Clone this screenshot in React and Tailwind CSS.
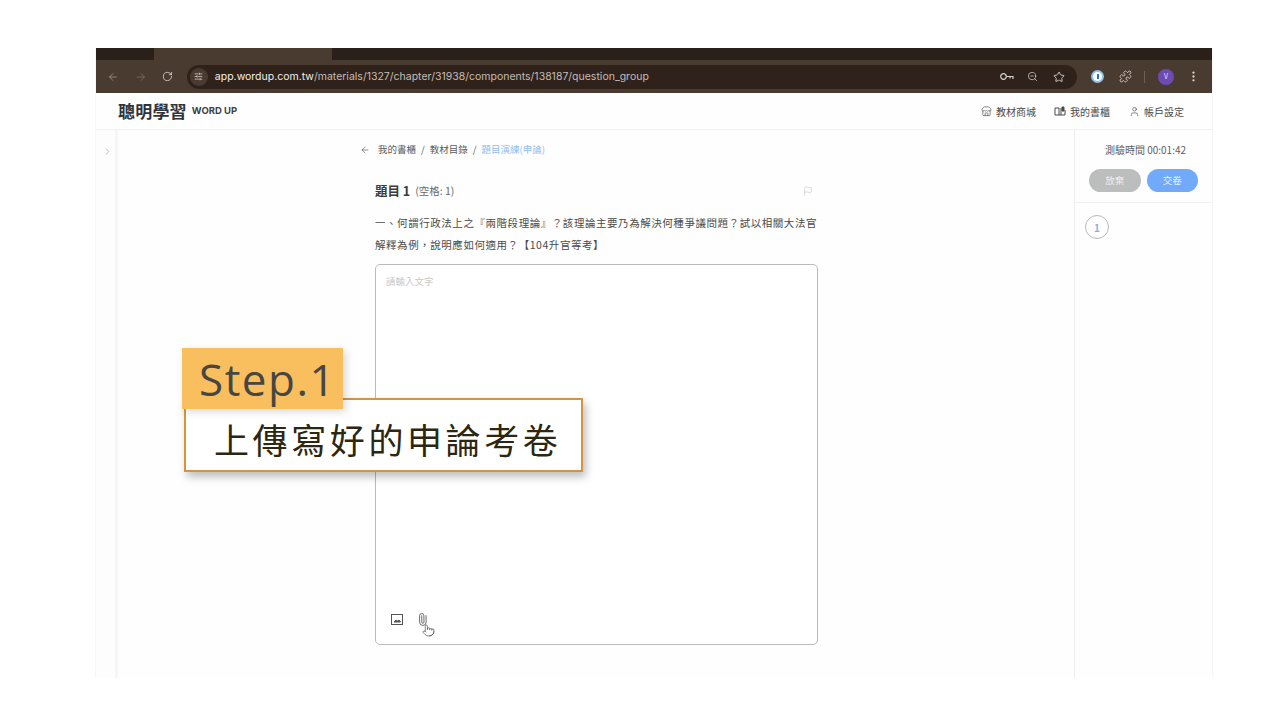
import { ArrowLeft, ArrowRight, RotateCw, SlidersHorizontal, ZoomOut, Star, Puzzle, EllipsisVertical, Store, User, Flag, ChevronRight, Paperclip, Pointer } from 'lucide-react';

const FONT = 'font-["Noto_Sans_CJK_TC","Noto_Sans",sans-serif]';

function BrowserBar() {
  return (
    <div>
      <div className="flex h-[12px] bg-[#2b2019]">
        <div className="ml-[58px] h-full w-[178px] bg-[#4a3b30]" />
      </div>
      <div className="flex h-[33px] items-center bg-[#4a3b30] pl-[11px] pr-[12px] text-[#d9d4d0]">
        <ArrowLeft size={12} strokeWidth={1.5} className="text-[#a79d95]" />
        <ArrowRight size={12} strokeWidth={1.5} className="ml-[16px] text-[#7f736a]" />
        <RotateCw size={11} strokeWidth={1.8} className="ml-[15px]" />
        <div className="ml-[14px] flex h-[24px] w-[894px] items-center rounded-full bg-[#2e221b] pl-[3px] pr-[12px]">
          <div className="flex h-[18px] w-[18px] items-center justify-center rounded-full bg-[#4a3b30]">
            <SlidersHorizontal size={9} strokeWidth={2} />
          </div>
          <span className="ml-[7px] font-['Inter',sans-serif] text-[10.5px] text-[#e3dfdc]">
            <span className="text-[#f2efed]">app.wordup.com.tw</span>
            <span className="text-[#c4bcb6]">/materials/1327/chapter/31938/components/138187/question_group</span>
          </span>
          <div className="ml-auto flex items-center gap-[13px]">
            <svg width="14" height="9" viewBox="0 0 14 9" fill="none" stroke="currentColor" strokeWidth="1.2">
              <circle cx="3.5" cy="4.5" r="2.8" />
              <path d="M6.3 4.5H13V7M10 4.5V6.5" />
            </svg>
            <ZoomOut size={11} strokeWidth={1.6} />
            <Star size={12} strokeWidth={1.8} className="ml-[2px]" />
          </div>
        </div>
        <div className="ml-[14px] flex h-[13px] w-[13px] items-center justify-center rounded-full border-[2px] border-[#8ec1f0] bg-white">
          <span className="h-[5px] w-[2px] bg-[#2e6fb5]" />
        </div>
        <Puzzle size={13} strokeWidth={1.6} className="ml-[15px]" />
        <div className="ml-[12px] h-[12px] w-px bg-[#6d5f55]" />
        <div className="ml-[13px] flex h-[16px] w-[16px] items-center justify-center rounded-full bg-[#6d4bb3] text-[7px] text-[#e8def8]">V</div>
        <EllipsisVertical size={13} strokeWidth={2.2} className="ml-[13px]" />
      </div>
    </div>
  );
}

function TopNav() {
  return (
    <div className="flex h-[37px] items-center border-b border-[#f0f1f1] pl-[22px] pr-[28px]">
      <span className="text-[17px] font-bold tracking-[0.2px] text-[#30343a]">聰明學習</span>
      <span className="ml-[5px] font-['Inter',sans-serif] text-[9.5px] font-bold text-[#3c3f44]">WORD UP</span>
      <div className="ml-auto flex items-center text-[10px] text-[#4a4a4a]">
        <Store size={11} strokeWidth={1.4} />
        <span className="ml-[4px]">教材商城</span>
        <svg className="ml-[18px]" width="12" height="11" viewBox="0 0 12 11" fill="none" stroke="currentColor" strokeWidth="1">
          <path d="M1 2h4v7H1zM5 9h2M7 2v7h4V4" />
          <path d="M8 1h2v4H8z" fill="currentColor" />
        </svg>
        <span className="ml-[4px]">我的書櫃</span>
        <User size={11} strokeWidth={1.4} className="ml-[19px]" />
        <span className="ml-[4px]">帳戶設定</span>
      </div>
    </div>
  );
}

function QuestionPanel() {
  return (
    <div className="flex-1 pl-[242px]">
      <div className="flex h-[39px] items-center text-[9.5px] text-[#5c5c5c]">
        <ArrowLeft size={10} strokeWidth={1.4} className="text-[#444]" />
        <span className="ml-[8px]">我的書櫃</span>
        <span className="mx-[5px]">/</span>
        <span>教材目錄</span>
        <span className="mx-[5px]">/</span>
        <span className="text-[#8fbdf0]">題目演練(申論)</span>
      </div>
      <div className="ml-[15px] w-[443px]">
        <div className="mt-[12px] flex h-[20px] items-center">
          <span className="text-[12.5px] font-bold text-[#3a3a3a]">題目 1</span>
          <span className="ml-[5px] text-[10.5px] text-[#6a6a6a]">(空格: 1)</span>
          <Flag size={10} strokeWidth={1} className="ml-auto mr-[5px] text-[#a9a9a9]" />
        </div>
        <p className="mt-[11px] w-[443px] text-[10.5px] leading-[22px] tracking-[0.55px] text-[#4a4a4a]">
          一、何謂行政法上之『兩階段理論』？該理論主要乃為解決何種爭議問題？試以相關大法官解釋為例，說明應如何適用？【104升官等考】
        </p>
        <div className="mt-[8px] flex h-[381px] flex-col rounded-[5px] border border-[#b9bcbc] bg-white px-[10px] pb-[18px] pt-[9px]">
          <span className="text-[9.5px] text-[#c8c8c8]">請輸入文字</span>
          <div className="mt-auto flex items-center pl-[5px] text-[#555]">
            <svg width="12" height="11" viewBox="0 0 12 11" fill="none" stroke="currentColor" strokeWidth="1">
              <rect x="0.5" y="0.5" width="11" height="10" />
              <path d="M3 8l2-2 1.5 1L8 6l1.5 2z" fill="currentColor" />
            </svg>
            <Paperclip size={13} strokeWidth={1.5} className="ml-[13px] rotate-[-45deg]" />
          </div>
        </div>
      </div>
    </div>
  );
}

function TestPanel() {
  return (
    <div className="w-[138px] border-l border-[#eceeee]">
      <div className="h-[73px] border-b border-[#f0f1f1] px-[14px]">
        <div className="flex h-[39px] items-center justify-center pl-[4px] text-[10px] text-[#5e5e5e]">測驗時間 00:01:42</div>
        <div className="flex gap-[6px]">
          <div className="flex h-[23px] w-[52px] items-center justify-center rounded-full bg-[#bcbdbd] text-[9.5px] text-[#eeeeee]">放棄</div>
          <div className="flex h-[23px] w-[52px] items-center justify-center rounded-full bg-[#70aaf9] text-[9.5px] text-[#e8f1fe]">交卷</div>
        </div>
      </div>
      <div className="pl-[10px] pt-[12px]">
        <div className="flex h-[24px] w-[24px] items-center justify-center rounded-full border border-[#b5b8ba] text-[10px] font-bold text-[#8fb0dc]">1</div>
      </div>
    </div>
  );
}

export default function App() {
  return (
    <div className={`relative h-[714px] overflow-hidden bg-white pl-[95px] pt-[48px] ${FONT}`}>
      <div className="flex h-[630px] w-[1118px] flex-col border-x border-[#f6f7f7] bg-[#fefefe]">
        <BrowserBar />
        <TopNav />
        <div className="flex flex-1">
          <div className="w-[22px] border-r-[3px] border-[#f6f6f6] bg-[#fdfdfd] pl-[6px] pt-[16px]">
            <ChevronRight size={11} strokeWidth={1.4} className="text-[#8aa0bd]" />
          </div>
          <QuestionPanel />
          <TestPanel />
        </div>
      </div>

      {/* Cursor over the attach button */}
      <Pointer size={13} strokeWidth={1.2} className="absolute left-[422px] top-[624px] text-[#444]" />

      {/* Step callout */}
      <div className="absolute left-[184px] top-[398px] flex h-[74px] w-[399px] items-center border-2 border-[#d9923f] bg-white pl-[28px] pt-[6px] shadow-[3px_5px_8px_rgba(0,0,0,0.25)]">
        <span className="whitespace-nowrap text-[35px] leading-none tracking-[3.6px] text-[#2d2610]">上傳寫好的申論考卷</span>
      </div>
      <div className="absolute left-[182px] top-[348px] flex h-[61px] w-[161px] items-center bg-[#f9bf5e] pl-[17px] shadow-[3px_3px_8px_rgba(0,0,0,0.15)]">
        <span className="font-['Open_Sans',sans-serif] text-[44px] leading-none tracking-[1.5px] text-[#474644]">Step.1</span>
      </div>
    </div>
  );
}
